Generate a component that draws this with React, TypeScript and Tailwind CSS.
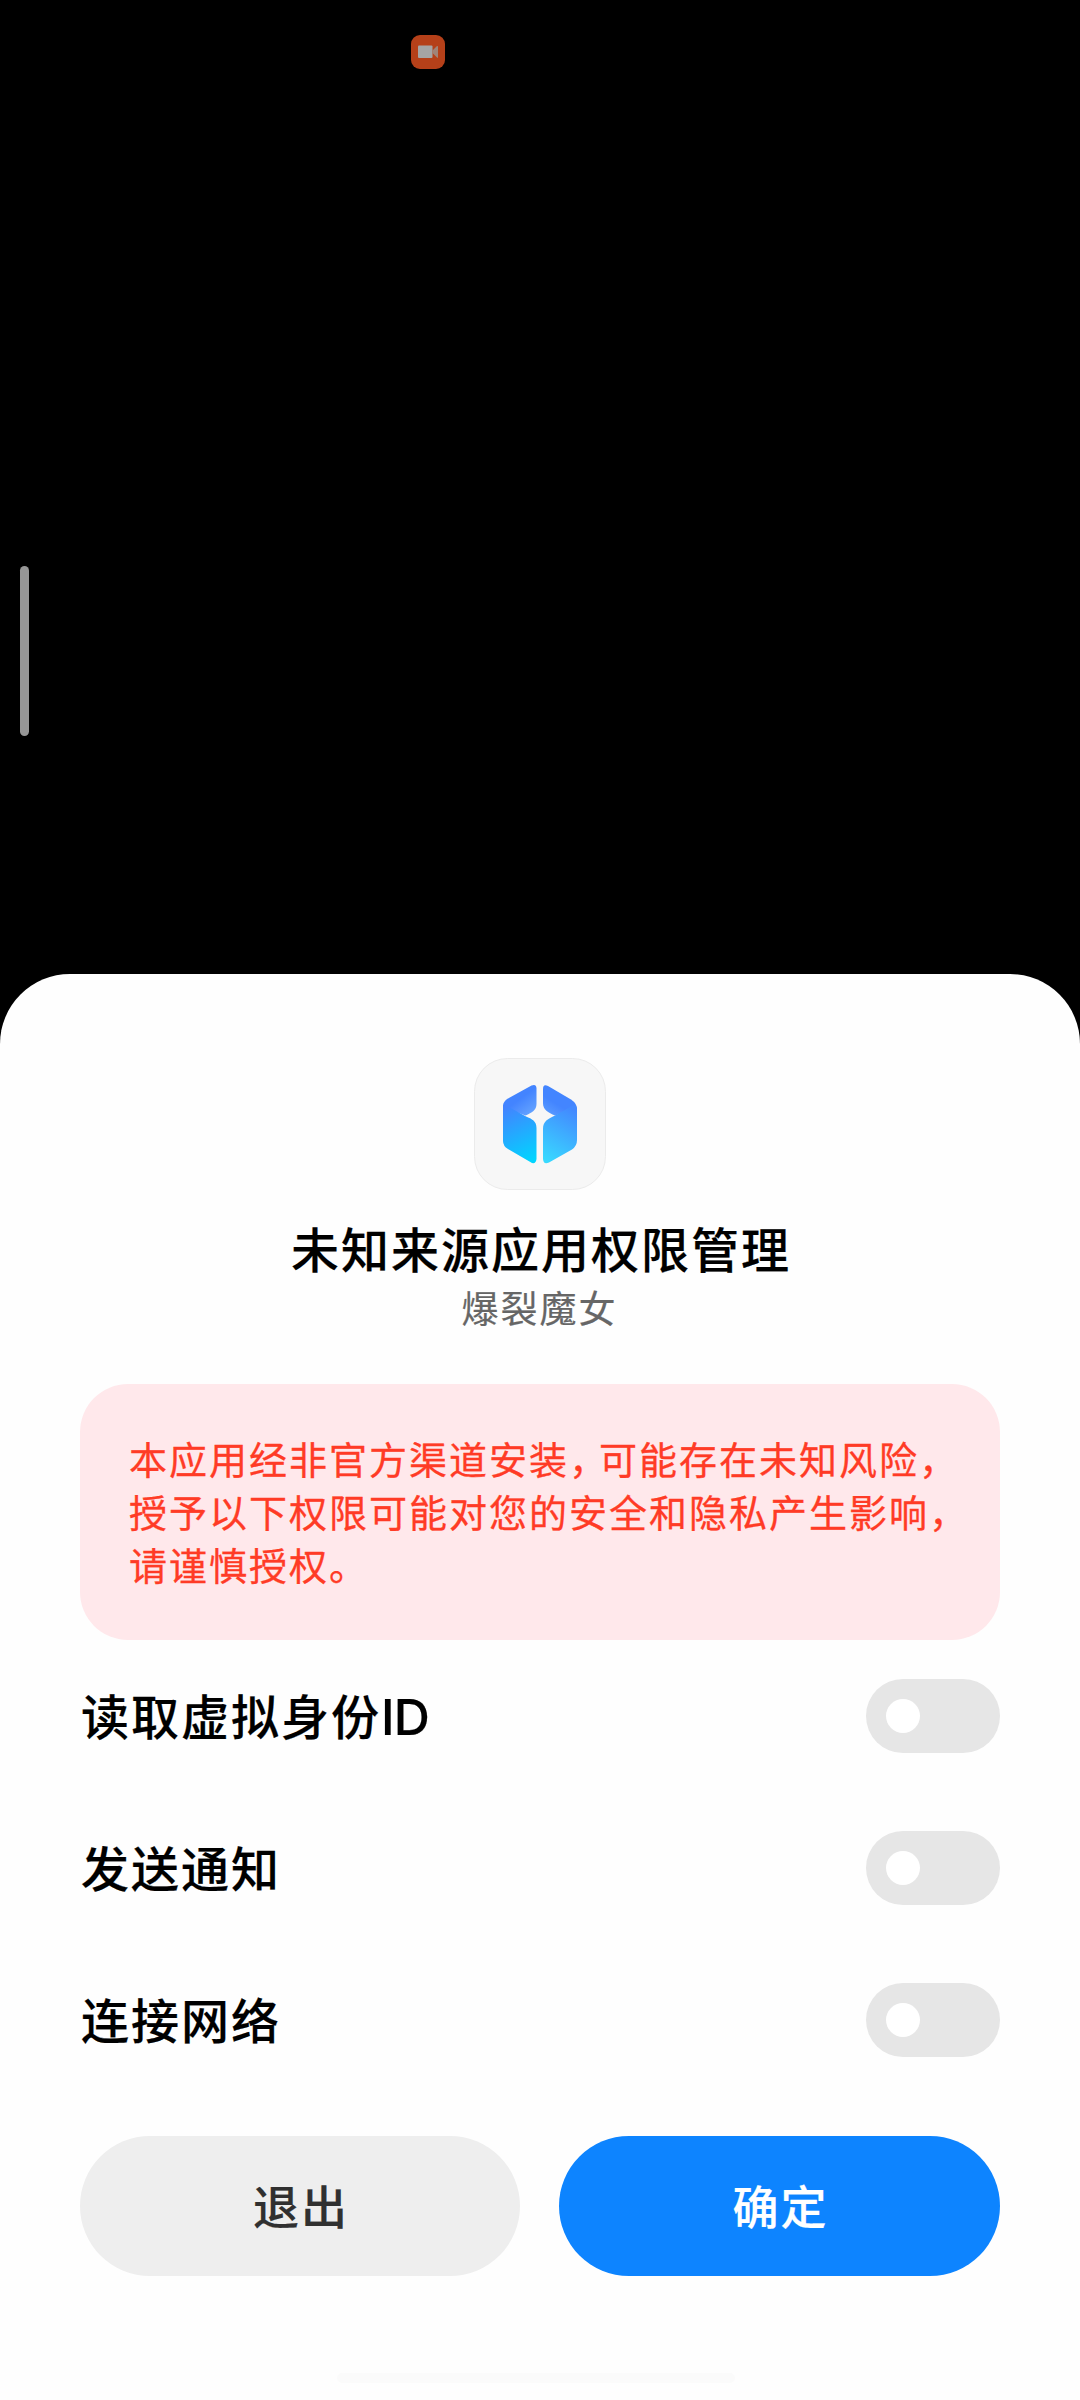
import { useState } from 'react'

interface ToggleProps {
  checked: boolean
  onChange: (v: boolean) => void
  label: string
}

const permissions = [
  { id: 'oaid', label: '读取虚拟身份', suffix: 'ID' },
  { id: 'notify', label: '发送通知' },
  { id: 'network', label: '连接网络' },
]

function Toggle({ checked, onChange, label }: ToggleProps) {
  return (
    <button
      type="button"
      role="switch"
      aria-checked={checked}
      aria-label={label}
      onClick={() => onChange(!checked)}
      className={`flex h-[74px] w-[134px] items-center rounded-full px-5 ${checked ? 'justify-end bg-[#0d84ff]' : 'bg-[#e6e6e6]'}`}
    >
      <span className="size-[34px] rounded-full bg-white" />
    </button>
  )
}

function RecordIcon() {
  return (
    <svg viewBox="0 0 34 34" className="size-[34px]">
      <rect width="34" height="34" rx="9" fill="#b54019" />
      <rect x="7" y="10.500" width="14.500" height="12.500" rx="1" fill="#a5a5a5" />
      <path d="M21.500 15.500 26 11Q27 10.500 27 12V22Q27 23.500 26 22.500L21.500 18Z" fill="#a08478" />
    </svg>
  )
}

function AppLogo() {
  return (
    <svg viewBox="0 0 132 132" className="size-[132px]">
      <defs>
        <linearGradient id="topLeft" x1="40" y1="38" x2="58" y2="62" gradientUnits="userSpaceOnUse">
          <stop offset="0.2" stopColor="#4384ff" />
          <stop offset="1" stopColor="#6eacff" />
        </linearGradient>
        <linearGradient id="topRight" x1="88" y1="40" x2="74" y2="62" gradientUnits="userSpaceOnUse">
          <stop offset="0.3" stopColor="#4385ff" />
          <stop offset="1" stopColor="#60a2ff" />
        </linearGradient>
        <linearGradient id="bottomLeft" x1="34" y1="48" x2="60" y2="102" gradientUnits="userSpaceOnUse">
          <stop stopColor="#4383ff" />
          <stop offset="1" stopColor="#00d5ff" />
        </linearGradient>
        <linearGradient id="bottomRight" x1="100" y1="52" x2="70" y2="104" gradientUnits="userSpaceOnUse">
          <stop stopColor="#4389ff" />
          <stop offset="1" stopColor="#38dcff" />
        </linearGradient>
      </defs>
      <rect x="0.5" y="0.5" width="131" height="131" rx="33" fill="#f7f7f7" stroke="#ebebeb" />
      <path d="M29 48Q29 43.500 34 40.500L57.500 27.500Q62.500 25.500 62.500 30.500V46C62.500 52 58 54.500 51.500 57.500L29 49Z" fill="url(#topLeft)" />
      <path d="M29 47.500Q30 46 33 48L52 58.500C58 61 62.500 63 62.500 70V101Q62 106 58 105L34 91Q29 88 29 83Z" fill="url(#bottomLeft)" />
      <path d="M69 31Q69 25.500 74 28L97 41.500Q103 45.500 103 51L81 57.500C74 54.500 69 52 69 45Z" fill="url(#topRight)" />
      <path d="M103 50Q102 46 97 48.500L81 57.500C74 61 69 63 69 71V101Q69.500 107 75 104.500L98 91.500Q103 88 103 82Z" fill="url(#bottomRight)" />
    </svg>
  )
}

// half-width form of the comma, so that it sits in a narrower cell
function Comma() {
  return <span className="mr-[9px] [font-feature-settings:'halt']">，</span>
}

export default function App() {
  const [granted, setGranted] = useState<Record<string, boolean>>({})

  return (
    <div className="relative flex h-[2400px] w-[1080px] flex-col overflow-hidden bg-black font-['Noto_Sans_CJK_SC',sans-serif]">
      <div className="h-[974px] shrink-0 pt-[35px] pl-[411px]">
        <RecordIcon />
      </div>
      <div className="absolute top-[566px] left-5 h-[170px] w-[9px] rounded-full bg-[#969696]" />

      <div className="flex flex-1 flex-col items-center rounded-t-[70px] bg-[#fefefe] px-20 pt-[84px]">
        <AppLogo />
        <h1 className="mt-[22px] pl-0.5 text-[48px] leading-[70px] font-medium tracking-[2px] text-black [-webkit-text-stroke:0.2px]">未知来源应用权限管理</h1>
        <p className="pr-px text-[37px] leading-[50px] tracking-[2px] text-[#666666] [-webkit-text-stroke:0.2px]">爆裂魔女</p>

        <div className="mt-[52px] h-[256px] w-full rounded-[48px] bg-[#ffe8eb] pt-[47px] pl-[49px] text-[38px] leading-[53px] tracking-[2px] whitespace-nowrap text-[#ff3b26] [-webkit-text-stroke:0.3px]">
          <p>本应用经非官方渠道安装<Comma />可能存在未知风险<Comma /></p>
          <p>授予以下权限可能对您的安全和隐私产生影响<Comma /></p>
          <p>请谨慎授权。</p>
        </div>

        <div className="w-full">
          {permissions.map((p) => (
            <div key={p.id} className="flex h-[152px] items-center justify-between">
              <span className="pb-1 pl-px text-[48px] leading-[70px] font-medium tracking-[2px] text-black [-webkit-text-stroke:0.2px]">
                {p.label}
                {p.suffix && <span className="font-[Inter] text-[50px] leading-none tracking-[-1px]">{p.suffix}</span>}
              </span>
              <Toggle
                label={p.label}
                checked={!!granted[p.id]}
                onChange={(v) => setGranted({ ...granted, [p.id]: v })}
              />
            </div>
          ))}
        </div>

        <div className="mt-10 flex w-full gap-[39px] text-[46px] font-medium tracking-[2px]">
          <button type="button" className="h-[140px] w-[440px] rounded-full bg-[#eeeeee] pb-[3px] pl-0.5 text-[#303030] [-webkit-text-stroke:0.2px]">退出</button>
          <button type="button" className="h-[140px] w-[441px] rounded-full bg-[#0d84ff] pb-[3px] pl-0.5 text-white [-webkit-text-stroke:0.2px]">确定</button>
        </div>
        <div className="mt-[97px] h-2.5 w-[398px] -translate-x-1 rounded-full bg-[#fbfbfb]" />
      </div>
    </div>
  )
}
